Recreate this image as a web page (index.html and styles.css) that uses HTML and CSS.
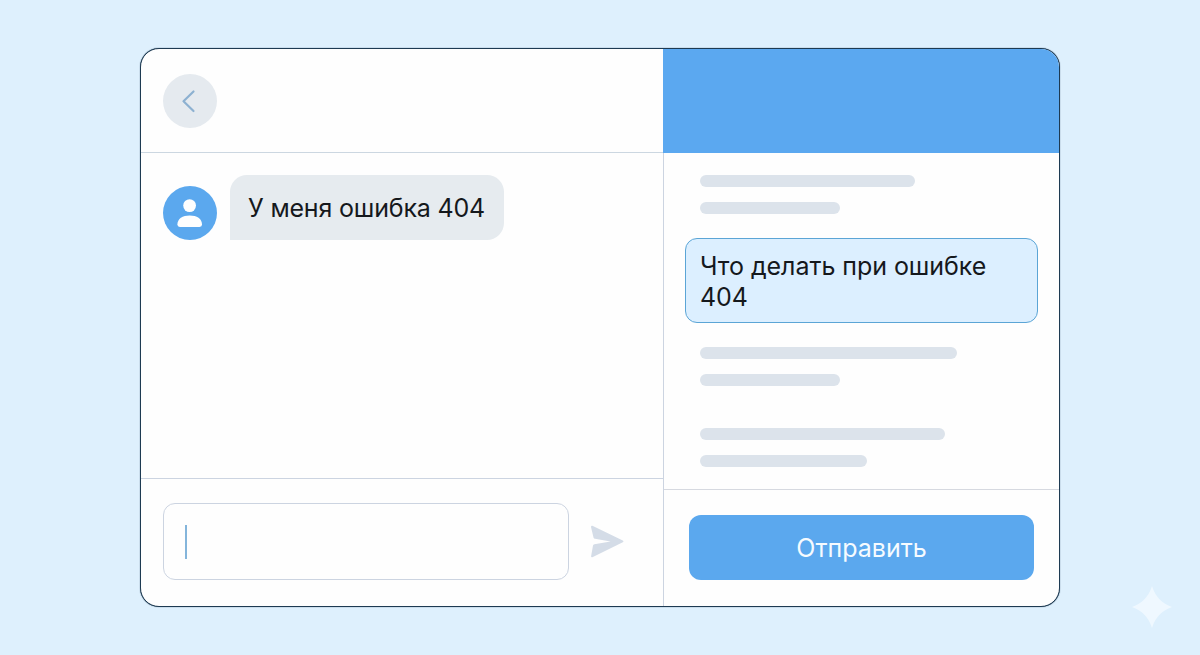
FILE: index.html
```
<!DOCTYPE html>
<html lang="ru">
<head>
    <meta charset="UTF-8">
    <meta name="viewport" content="width=device-width, initial-scale=1.0">
    <title>Чат поддержки</title>
    <link rel="stylesheet" href="styles.css">
</head>
<body>
    <main class="window">
        <section class="chat">
            <header class="chat-header">
                <button class="back" aria-label="Назад">
                    <svg width="54" height="54" viewBox="0 0 54 54">
                        <path d="M30.5 17.5L20.5 27.2L30.5 37"/>
                    </svg>
                </button>
            </header>
            <div class="messages">
                <svg class="avatar" width="54" height="54" viewBox="0 0 54 54">
                    <circle class="avatar-bg" cx="27" cy="27" r="27"/>
                    <circle cx="26.6" cy="19.6" r="6.4"/>
                    <path d="M14.4 38.6C14.4 32.8 19.6 29.6 26.7 29.6S39 32.8 39 38.6Q39 41 36.6 41H16.8Q14.4 41 14.4 38.6Z"/>
                </svg>
                <div class="bubble">У меня ошибка 404</div>
            </div>
            <footer class="chat-footer">
                <div class="input"><span class="cursor"></span></div>
                <svg class="send" width="34" height="34" viewBox="0 0 34 34">
                    <path d="M1.4 .8L31.8 15.6Q33.4 16.4 31.8 17.2L1.4 32.2Q0 32.600 .1 31.200L2 20.600Q2.200 19.500 3.400 19.200L19.600 16.500L4 13.700Q2.800 13.500 2.500 12.400L0 2Q0 .4 1.400 .8Z"/>
                </svg>
            </footer>
        </section>
        <section class="help">
            <header class="help-header"></header>
            <div class="list">
                <div class="item">
                    <div class="line w215"></div>
                    <div class="line w140"></div>
                </div>
                <div class="item active">Что делать при ошибке 404</div>
                <div class="item">
                    <div class="line w257"></div>
                    <div class="line w140"></div>
                </div>
                <div class="item last">
                    <div class="line w245"></div>
                    <div class="line w167"></div>
                </div>
            </div>
            <footer class="help-footer">
                <button class="btn">Отправить</button>
            </footer>
        </section>
    </main>
    <svg class="star" width="40" height="42" viewBox="0 0 40 42">
        <path d="M20 0C23.5 11 30 17.5 40 21C30 24.5 23.5 31 20 42C16.5 31 10 24.5 0 21C10 17.5 16.5 11 20 0Z"/>
    </svg>
</body>
</html>
```
FILE: styles.css
```
* {
    box-sizing: border-box;
}
body {
    margin: 0;
    padding-top: 48px;
    height: 655px;
    overflow: hidden;
    background-color: #def0fd;
    font-family: Inter, "Liberation Sans", sans-serif;
    font-size: 25px;
    color: #15181c;
}
button {
    border: none;
    padding: 0;
    font: inherit;
}
svg {
    display: block;
    flex-shrink: 0;
}
.window {
    display: flex;
    width: 920px;
    height: 559px;
    margin: 0 auto;
    background-color: #fefefe;
    border: 1px solid #1d3a52;
    border-radius: 19px;
    box-shadow: 0 0 1px #1d3a52;
    overflow: hidden;
}

/* Левая часть: переписка */
.chat {
    display: flex;
    flex-direction: column;
    width: 523px;
    border-right: 1px solid #ccd4e1;
}
.chat-header {
    height: 104px;
    padding: 25px 21.5px;
    border-bottom: 1px solid #ccd7e1;
}
.back {
    width: 54px;
    height: 54px;
    border-radius: 50%;
    background-color: #e5eaef;
}
.back path {
    fill: none;
    stroke: #8db1d1;
    stroke-width: 2.2;
    stroke-linecap: round;
    stroke-linejoin: round;
}
.messages {
    flex: 1;
    display: flex;
    align-items: flex-start;
    gap: 13.5px;
    padding: 22px 21.5px;
}
.avatar {
    margin-top: 11px;
    fill: #fefefe;
}
.avatar-bg {
    fill: #5ba8ee;
}
.bubble {
    width: 274px;
    height: 65px;
    padding-left: 18px;
    line-height: 66px;
    letter-spacing: -0.18px;
    white-space: nowrap;
    background-color: #e6ebef;
    border-radius: 17px 17px 17px 0;
}
.chat-footer {
    display: flex;
    height: 128px;
    padding: 24px 22px;
    gap: 22px;
    border-top: 1px solid #ccd4e1;
}
.input {
    width: 406px;
    height: 77px;
    padding: 21px;
    border: 1px solid #ccd4e1;
    border-radius: 12px;
}
.cursor {
    display: block;
    width: 2px;
    height: 34px;
    background-color: #84b5db;
}
.send {
    margin-top: 22px;
    fill: #d4dce7;
}

/* Правая часть: подсказки */
.help {
    flex: 1;
    display: flex;
    flex-direction: column;
}
.help-header {
    height: 104px;
    margin-left: -1px;
    background-color: #5ba8f0;
}
.list {
    flex: 1;
    padding: 22px 21px 0;
}
.item {
    padding-left: 15px;
}
.item.active {
    width: 353px;
    height: 85px;
    margin: 24px 0;
    padding: 12px 14px;
    line-height: 30.5px;
    letter-spacing: -0.05px;
    background-color: #dcefff;
    border: 1px solid #5ba5d6;
    border-radius: 12px;
}
.item.last {
    margin-top: 42px;
}
.line {
    height: 12px;
    border-radius: 6px;
    background-color: #dce3eb;
}
.line + .line {
    margin-top: 15px;
}
.w140 {
    width: 140px;
}
.w167 {
    width: 167px;
}
.w215 {
    width: 215px;
}
.w245 {
    width: 245px;
}
.w257 {
    width: 257px;
}
.help-footer {
    height: 117px;
    padding: 25px;
    border-top: 1px solid #d6d9e0;
}
.btn {
    display: block;
    width: 345px;
    height: 65px;
    border-radius: 12px;
    background-color: #5ba8ee;
    color: #f6fbff;
}

.star {
    position: absolute;
    right: 28px;
    bottom: 27px;
    fill: #eff8ff;
}
```
